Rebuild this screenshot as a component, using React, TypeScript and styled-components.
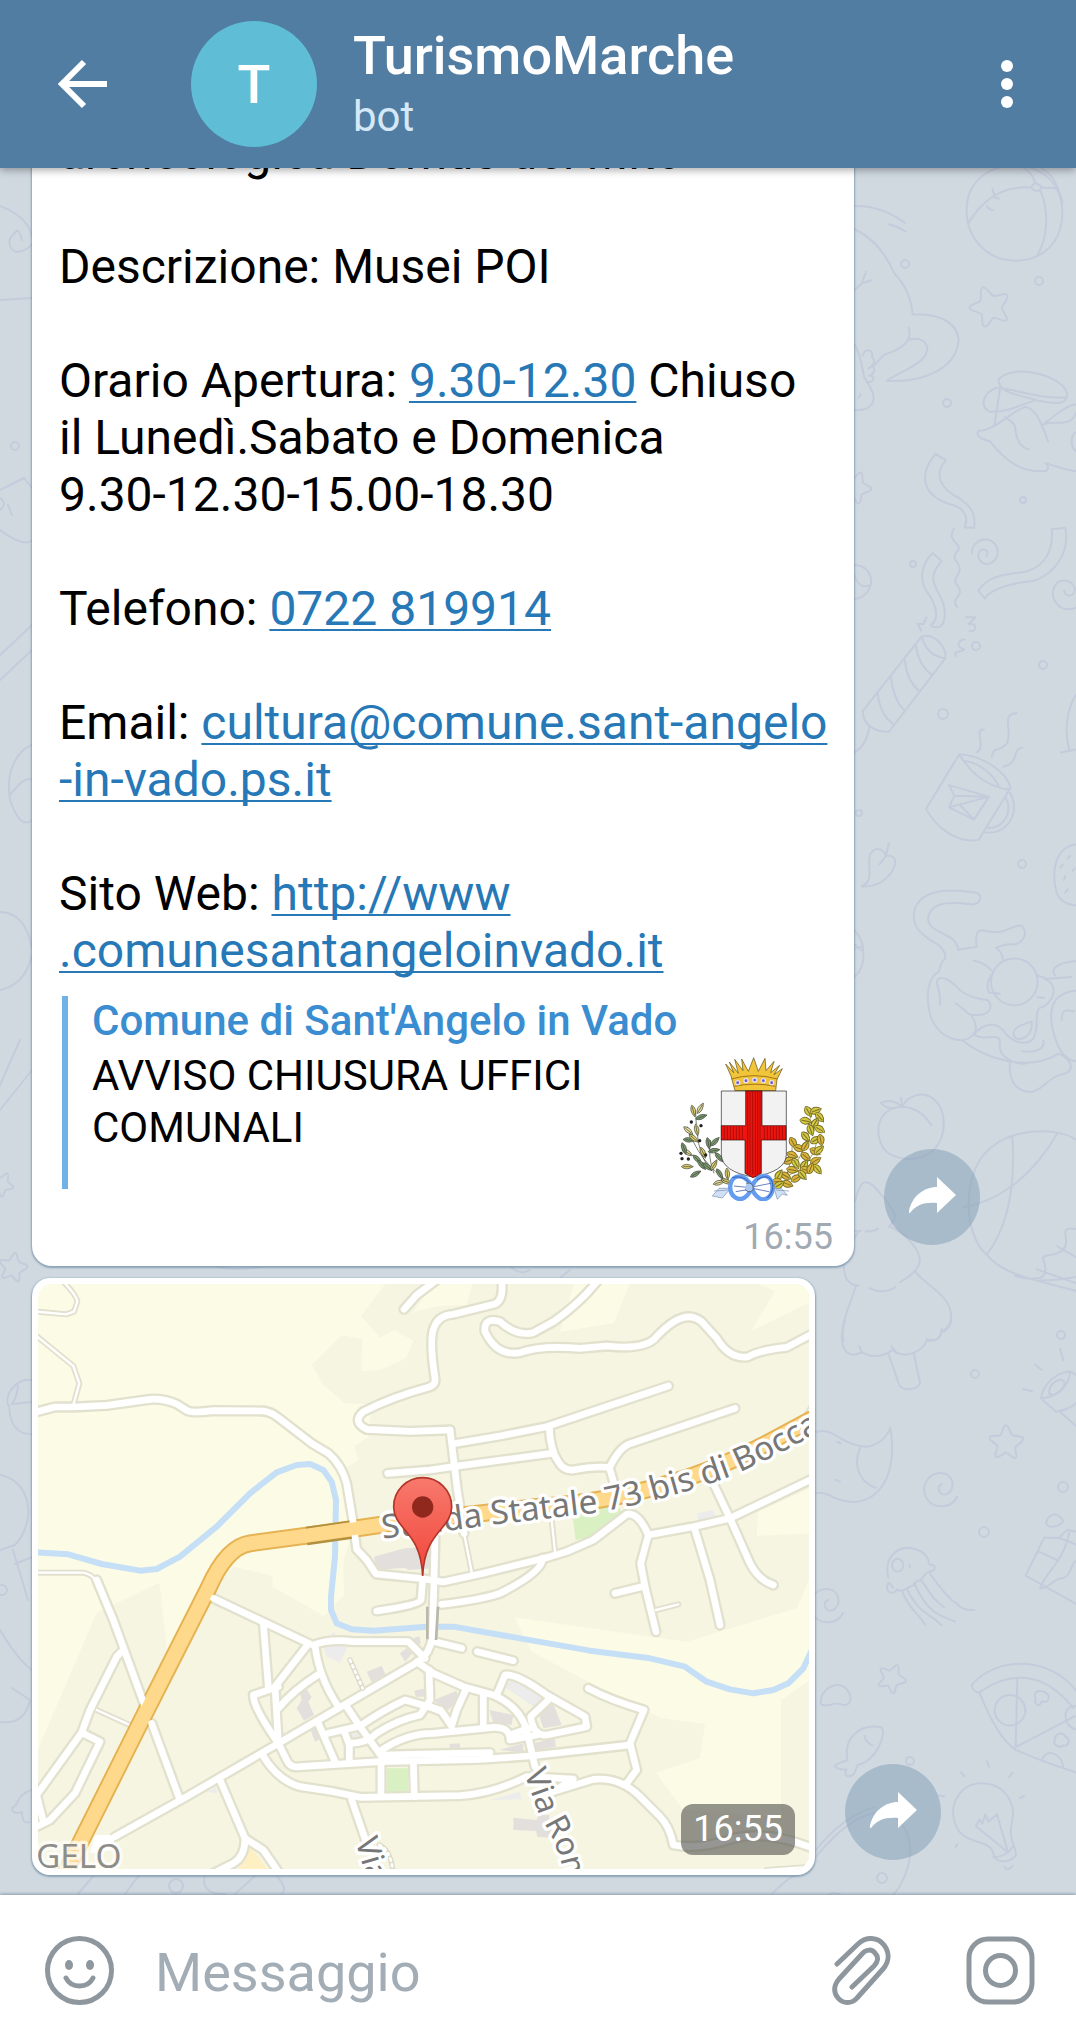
import React from 'react';
import styled, { createGlobalStyle } from 'styled-components';

const GlobalStyle = createGlobalStyle`
  *, *::before, *::after { box-sizing: border-box; }
  body {
    margin: 0;
    background: #d0d9e0;
    font-family: Roboto, "Noto Sans", sans-serif;
    color: #000;
  }
  button { font: inherit; border: 0; padding: 0; background: none; cursor: pointer; }
`;

const Screen = styled.div`
  display: flex;
  flex-direction: column;
  height: 100vh;
  overflow: hidden;
`;

const Header = styled.header`
  display: flex;
  align-items: center;
  flex: none;
  min-height: 168px;
  padding: 0 48px 0 56px;
  background: #517da2;
  box-shadow: 0 2px 8px rgba(0, 0, 0, 0.35);
  z-index: 2;
`;

const IconButton = styled.button`
  display: block;
  flex: none;
  line-height: 0;
`;

const Avatar = styled.div`
  display: flex;
  align-items: center;
  justify-content: center;
  flex: none;
  width: 126px;
  height: 126px;
  margin-left: 80px;
  border-radius: 50%;
  background: #5fbed5;
  color: #fff;
  font-size: 54px;
  font-weight: 500;
`;

const Heading = styled.div`
  flex: 1;
  min-width: 0;
  margin-left: 36px;
`;

const ChatTitle = styled.h1`
  margin: 0;
  color: #fff;
  font-size: 54px;
  font-weight: 500;
  line-height: 66px;
`;

const ChatStatus = styled.p`
  margin: 0;
  color: #d5e8f7;
  font-size: 42px;
  line-height: 56px;
`;

const Chat = styled.main`
  position: relative;
  display: flex;
  flex: 1;
  flex-direction: column;
  justify-content: flex-end;
  gap: 12px;
  min-height: 0;
  padding: 0 30px 20px 32px;
  overflow: hidden;
  background: #d0d9e0;
`;

const WallpaperArt = styled.svg`
  position: absolute;
  inset: 0;
  width: 100%;
  height: 100%;
  fill: none;
  stroke: #c4ccdc;
  stroke-width: 2;
  stroke-linecap: round;
  stroke-linejoin: round;
  path, circle, ellipse { vector-effect: non-scaling-stroke; }
`;

const MessageRow = styled.div`
  position: relative;
  display: flex;
  flex: none;
  align-items: flex-end;
  gap: 30px;
`;

const Bubble = styled.article`
  flex: 0 1 822px;
  min-width: 0;
  padding: 0 21px 8px 27px;
  border-radius: 20px;
  background: #fff;
  box-shadow: 0 1px 2px 1px rgba(110, 140, 165, 0.7);
`;

const MessageText = styled.p`
  margin: 0;
  font-size: 48px;
  line-height: 57px;
  white-space: pre-line;
`;

const TextLink = styled.a`
  color: #2678b6;
  text-decoration: underline;
  text-decoration-thickness: 2px;
  text-underline-offset: 4px;
  text-decoration-skip-ink: none;
`;

const Preview = styled.section`
  margin: 17px 8px 0 3px;
  padding-left: 24px;
  border-left: 6px solid #70b1e6;
`;

const PreviewTitle = styled.h2`
  margin: 0 0 4px;
  color: #3a8dd0;
  font-size: 42px;
  font-weight: 500;
  line-height: 50px;
`;

const PreviewBody = styled.div`
  display: flex;
  justify-content: space-between;
  gap: 20px;
`;

const PreviewText = styled.p`
  margin: 0;
  max-width: 560px;
  font-size: 42px;
  line-height: 52px;
`;

const CrestArt = styled.svg`
  flex: none;
  width: 146px;
  height: 146px;
  margin: 5px 0 -12px;
`;

const Time = styled.time`
  display: block;
  margin-top: 27px;
  color: #a1aab3;
  font-size: 36px;
  line-height: 42px;
  text-align: right;
`;

const MapBubble = styled.article`
  position: relative;
  flex: 0 1 783px;
  min-width: 0;
  padding: 6px;
  border-radius: 18px;
  background: #fff;
  box-shadow: 0 1px 2px 1px rgba(110, 140, 165, 0.7);
`;

const MapArt = styled.svg`
  display: block;
  width: 100%;
  height: auto;
  border-radius: 14px;
`;

const MapTime = styled.time`
  position: absolute;
  right: 20px;
  bottom: 20px;
  padding: 4px 12px;
  border-radius: 12px;
  background: rgba(80, 80, 76, 0.6);
  color: #fff;
  font-size: 36px;
  line-height: 43px;
`;

const ShareButton = styled.button<{ $lift: number }>`
  flex: none;
  width: 96px;
  height: 96px;
  margin-bottom: ${(p) => p.$lift}px;
  border-radius: 50%;
  background: rgba(125, 155, 178, 0.48);
  line-height: 0;
`;

const Composer = styled.form`
  display: flex;
  align-items: center;
  flex: none;
  min-height: 145px;
  padding: 6px 41px 0 45px;
  background: #fff;
  box-shadow: 0 -1px 3px rgba(90, 115, 135, 0.6);
  z-index: 2;
`;

const MessageInput = styled.input`
  flex: 1;
  min-width: 0;
  margin: 0 41px;
  padding: 4px 0 0;
  border: 0;
  outline: 0;
  background: transparent;
  color: #000;
  font-family: inherit;
  font-size: 54px;
  line-height: 64px;
  &::placeholder { color: #a3adb6; opacity: 1; }
`;

const ComposerActions = styled.div`
  display: flex;
  flex: none;
  gap: 75px;
`;

const STAR = 'M0 -22 C4 -22 6 -10 9 -8 C14 -6 24 -8 24 -3 C24 1 14 6 13 9 C12 14 17 22 13 24 C9 25 3 16 0 16 C-3 16 -11 25 -14 22 C-17 18 -11 11 -12 7 C-14 3 -24 -1 -23 -5 C-21 -9 -11 -6 -8 -8 C-5 -11 -4 -22 0 -22Z';
const SPIRAL = 'M17 8 C11 20 -6 20 -13 10 C-21 -3 -11 -17 2 -16 C14 -15 16 1 7 5 C0 8 -5 -2 2 -5';

function Star({ x, y, r = 0, s = 1 }: { x: number; y: number; r?: number; s?: number }) {
  return <path d={STAR} transform={`translate(${x} ${y}) rotate(${r}) scale(${s})`} />;
}

function Spiral({ x, y, r = 0, s = 1 }: { x: number; y: number; r?: number; s?: number }) {
  return <path d={SPIRAL} transform={`translate(${x} ${y}) rotate(${r}) scale(${s})`} />;
}

const BUBBLES = [
  [905, 264, 4], [1039, 281, 4], [947, 403, 4], [1023, 500, 3], [913, 564, 3], [976, 646, 4], [1043, 665, 4],
  [943, 714, 5], [859, 813, 3], [1022, 864, 4], [1061, 1335, 4], [975, 1374, 4], [1063, 1487, 5], [984, 1532, 5],
  [910, 1761, 4], [882, 1878, 5], [15, 446, 4], [176, 1886, 7], [2, 1590, 5],
];

function Wallpaper() {
  return (
    <WallpaperArt viewBox="0 168 1076 1727" preserveAspectRatio="xMidYMid slice" aria-hidden="true">
      {BUBBLES.map(([x, y, r]) => <circle key={`${x}-${y}`} cx={x} cy={y} r={r} />)}
      <Star x={989} y={305} r={-20} s={0.85} />
      <Star x={1006} y={1441} s={0.72} />
      <Star x={892} y={1677} r={25} s={0.6} />
      <Star x={856} y={486} r={20} s={0.65} />
      <Star x={13} y={1266} r={10} s={0.6} />
      <Star x={2} y={1183} r={30} s={0.5} />
      <Spiral x={986} y={552} r={150} s={0.75} />
      <Spiral x={1068} y={594} r={-70} s={0.95} />
      <Spiral x={940} y={1489} />
      <Spiral x={826} y={1605} />
      <g transform="translate(840 160) scale(0.3333 0.3827)">
        <path d="M380 135 C378 60 440 15 525 15 C610 15 668 65 667 140 C665 215 610 263 525 263 C440 262 382 205 380 135Z" />
        <path d="M385 165 C430 100 490 66 573 72 C580 58 590 58 605 70 C600 84 585 84 573 72 M605 72 L650 74 M545 17 C570 30 580 42 585 58 M605 22 C640 40 650 60 668 110 M602 82 C630 140 620 210 592 248 M457 75 L465 98 L477 101 M441 120 Q448 130 460 131" />
        <path d="M20 122 C80 115 140 130 195 164 M147 168 Q175 174 197 187 M30 175 C100 200 140 250 163 296 C200 330 215 370 218 404 C290 400 350 420 356 470 C350 545 250 582 140 577 C190 548 265 530 262 490 C255 465 225 465 205 470 C190 490 165 500 135 508 C120 515 115 530 103 535 M206 437 Q212 455 205 468 M78 292 L65 323 L94 314 M65 323 L30 350" />
        <path d="M30 470 C60 490 65 540 72 565 C85 590 102 600 101 625 C98 645 75 658 30 653 M68 510 C80 490 100 495 96 515 C110 525 100 540 84 545 M96 535 C110 550 100 560 88 563 C110 565 100 582 82 580 M62 612 L55 622" />
        <path d="M475 575 C510 530 670 560 682 612 C680 640 650 638 600 630 C530 612 480 610 475 575 M475 595 C530 600 600 625 678 620 M480 598 L463 695 M470 595 C425 610 420 645 450 658 C500 660 540 640 580 630 M415 708 C470 705 500 665 555 645 C590 650 605 690 625 736 M415 708 C405 725 430 730 450 735 C500 790 550 820 620 812 Q630 800 617 792 C650 800 680 813 710 813 M495 672 C525 690 525 690 527 710 Q535 750 566 756 M605 695 C640 670 680 640 710 638 M612 690 C660 680 690 700 710 658 M710 710 C690 720 690 750 710 762" />
        <path d="M287 768 L318 785 C280 820 300 860 360 885 C400 910 408 930 402 961 L374 960 C390 920 360 905 320 897 C240 870 240 815 287 768Z M342 963 C315 1000 375 1000 350 1025 C325 1050 380 1050 350 1090 C330 1110 380 1115 350 1145 Q340 1155 351 1168" />
        <path d="M278 1027 L305 1048 C260 1090 285 1110 300 1140 C320 1170 320 1215 295 1221 Q275 1222 273 1215 C305 1195 280 1150 262 1130 C235 1095 245 1055 278 1027Z M635 965 L676 961 C690 1020 650 1080 580 1100 C520 1105 450 1120 435 1146 L415 1126 C450 1080 500 1085 560 1075 C620 1060 640 1015 635 965Z" />
        <path d="M377 1195 L407 1195 L385 1213 Q410 1210 405 1225 Q400 1235 388 1230 M259 1195 L251 1213 L233 1212 L244 1230 M375 1253 Q355 1253 355 1270 L373 1280 L346 1288 L347 1297" />
        <path d="M245 1245 L68 1440 C70 1480 110 1495 147 1494 L316 1302 C320 1270 280 1235 245 1245 Q260 1295 316 1302 M228 1268 Q235 1320 277 1346 M195 1308 Q200 1360 238 1388 M153 1353 Q160 1410 193 1438 M113 1392 Q120 1450 158 1472 M88 1480 Q80 1530 43 1548 M43 1058 C110 1060 110 1140 43 1147 M43 1085 Q60 1125 92 1110" />
        <path d="M710 1395 C675 1440 675 1500 688 1542 M662 1548 L710 1540" />
      </g>
      <g transform="translate(840 740) scale(0.3333 0.3827)">
        <path d="M358 37 L258 180 C290 230 350 270 416 261 L512 125 C500 85 430 40 358 37 C400 100 460 125 508 130 M375 55 C420 60 460 90 477 122 M497 150 C520 190 490 230 445 230 M510 138 C545 190 500 250 435 241 M327 118 L447 148 L402 208 L327 176 L343 146Z M343 146 L447 148 L327 176 M360 170 L402 208 M432 -27 C400 -30 440 20 410 32 M530 -70 C480 -70 520 -20 500 10 Q485 23 470 25 Q460 25 455 45 M547 20 C515 22 540 60 490 70" />
        <path d="M65 382 C105 370 80 330 90 300 C105 275 130 285 138 302 C180 300 165 330 155 345 C130 375 100 385 65 382 M147 269 L138 302 L118 326" />
        <path d="M354 548 C350 500 265 510 264 465 C275 415 350 425 400 430 C425 425 430 400 400 398 C340 390 250 385 225 440 C210 490 250 510 275 525 C310 540 320 560 315 572 C300 580 300 595 297 605 C260 620 255 680 275 730 C300 780 370 800 400 770 C415 755 405 730 390 717 C450 725 460 700 445 680 C400 675 370 665 350 645 C310 610 285 620 292 640 Q302 665 300 692 M354 548 L410 540 C405 510 410 490 440 500 C500 510 520 480 545 485 C570 510 540 540 510 533 Q490 535 468 543 Q487 555 488 573 M400 576 Q430 580 455 602 M348 688 C370 700 380 715 390 717 M400 770 C430 740 470 730 500 770 C520 790 560 800 580 780 C600 750 580 710 600 700 C640 690 660 640 615 625 M365 783 C430 830 560 870 655 820 M405 770 C430 790 480 760 480 790 C470 830 530 850 560 845 M510 838 C505 880 520 920 575 920 C620 910 620 880 680 870 C705 855 690 835 660 820" />
        <ellipse cx="523" cy="632" rx="70" ry="61" />
        <path d="M458 610 Q435 635 447 660 L480 663 M592 615 L622 624 L693 619 M592 672 L612 674 M710 578 C650 580 630 600 645 615 M710 655 C625 660 620 720 650 790 Q670 835 710 840 M665 732 Q665 700 690 708 L703 708 M523 775 C510 745 570 740 575 735 C580 780 530 790 523 775 M545 813 C600 820 615 800 610 785 M710 272 C640 280 635 350 650 400 Q665 430 710 432 M690 302 L683 310 M668 326 L662 334 M704 336 L698 342 M676 355 L672 366 M684 390 L676 398 M43 497 C80 530 80 590 43 620 M43 545 L65 540 M45 535 L65 550" />
        <path d="M187 958 C100 960 100 1050 145 1080 C200 1105 290 1105 310 1020 C320 950 270 920 230 928 Q200 935 187 958 C230 960 255 980 274 1006 M187 958 L183 935 M187 958 C160 940 140 940 123 948 Q140 965 165 962" />
        <path d="M45 1205 C60 1155 70 1145 100 1165 Q150 1210 166 1243 C160 1265 140 1275 150 1272 C200 1290 250 1340 237 1370 Q230 1390 180 1417 M45 1283 L62 1283 M78 1284 Q100 1285 114 1277 M88 1432 Q130 1450 165 1430 M55 1285 C20 1330 0 1370 20 1410 Q40 1428 55 1425 M48 1425 C30 1480 0 1520 10 1570 M225 1388 C260 1430 340 1450 333 1515 C325 1545 310 1550 305 1540 C305 1560 290 1575 260 1565" />
        <path d="M710 1045 C650 1010 500 1010 430 1085 C370 1150 370 1290 440 1345 C490 1400 590 1410 710 1440 M517 1035 C525 1140 515 1260 440 1345 M652 1028 C590 1120 500 1200 370 1221 M710 1278 C650 1270 690 1300 675 1325 C650 1355 610 1340 608 1355 C620 1375 620 1400 600 1405 Q560 1412 525 1400 M652 1323 L710 1352 M590 1383 L710 1420 M600 1412 Q660 1412 710 1402" />
      </g>
      <g transform="translate(810 1320) scale(0.3333 0.3731)">
        <path d="M105 0 C80 70 110 110 155 86 Q200 110 248 80 C290 110 340 80 350 55 Q390 60 395 30 Q420 20 425 0 M148 70 L155 86 M244 70 L255 82 M235 90 L268 175 C280 190 320 190 330 170 L312 90" />
        <path d="M18 300 C70 285 90 335 170 340 Q225 330 241 288 C270 440 180 520 70 475 Q40 460 18 464 M152 340 C130 380 140 430 197 450 M83 327 L93 331 M75 428 L90 434 M640 185 L666 191 M675 119 L695 134 M750 77 L760 108" />
        <path d="M693 210 C700 170 740 140 780 138 L800 148 M693 210 L738 246 Q780 240 800 222 M693 210 C730 210 780 180 780 138 M718 198 C715 165 760 150 764 168 C760 195 730 205 718 198 M752 248 L800 285" />
        <path d="M708 545 C715 520 740 510 760 538 C750 555 715 560 708 545 M703 583 L647 685 L800 762 M703 583 L748 584 L800 602 M685 620 L745 645 M748 584 Q765 565 775 563 L800 568 M778 570 C760 650 710 670 690 720 C720 720 730 690 760 692 C790 680 780 650 800 645" />
        <path d="M235 690 C220 630 270 600 320 615 C350 625 355 640 358 655 C385 655 375 675 355 675 C340 680 340 700 320 700 C310 720 300 710 290 720 Q270 730 262 722 C250 740 220 730 235 705 Q240 705 250 718" />
        <circle cx="263" cy="657" r="17" />
        <path d="M298 655 L300 664 M275 725 C300 780 320 780 345 817 M290 720 C330 790 350 780 395 818 M312 705 C350 780 380 790 435 808 M335 700 C360 730 370 750 403 770 M360 680 C400 730 420 750 440 760 Q460 780 493 777" />
        <path d="M485 978 C560 900 720 900 800 995 M485 978 Q490 1000 508 998 C600 940 700 940 790 1040 M508 998 C540 1070 580 1130 617 1152 Q700 1185 800 1213 M622 962 L617 1145 L795 1062 M695 1180 C705 1150 750 1155 760 1197 M800 1035 C755 1030 755 1090 800 1098" />
        <ellipse cx="600" cy="1046" rx="46" ry="41" />
        <path d="M675 1010 C670 990 700 990 715 1005 C720 1025 705 1025 695 1022 C690 1040 670 1030 677 1018Z M735 1125 C735 1105 760 1105 765 1115 C785 1125 775 1145 760 1140 C745 1150 725 1135 735 1125Z" />
        <path d="M32 1028 C30 990 80 965 105 985 C135 1010 120 1040 95 1030 Q75 1025 60 1032 Q38 1035 32 1028Z M112 1180 C100 1120 150 1080 215 1092 C230 1110 200 1180 145 1192 C135 1195 140 1225 115 1223 Q100 1220 110 1205 C80 1205 60 1195 90 1187Z M164 1115 Q165 1130 187 1141" />
        <path d="M550 1430 C540 1390 470 1410 440 1360 C410 1300 450 1240 520 1242 C590 1245 620 1300 605 1350 C595 1400 620 1410 618 1435 C600 1455 560 1460 550 1430 M550 1440 Q590 1440 610 1410 M583 1465 Q595 1480 608 1462 M592 1425 L498 1357 L508 1338 L517 1350 L526 1325 L535 1345 L561 1325 L592 1420 M530 1181 L537 1197 M453 1212 L463 1223 M608 1213 L598 1225 M642 1276 L630 1281 M385 1274 L403 1277 M436 1413 L442 1405" />
        <path d="M18 1420 C80 1350 140 1320 195 1305 M18 1438 C100 1350 160 1320 220 1318 Q300 1340 301 1430 Q290 1510 235 1554 M35 1554 C60 1530 90 1530 105 1554" />
      </g>
      <path d="M0 206 C15 212 28 220 32 236 M15 233 C5 240 10 252 18 252 Q28 250 32 244 M15 233 Q18 226 22 240 M0 300 L32 298 M0 490 L24 478 L32 488 M0 530 Q25 548 32 540 M0 510 Q8 504 0 498 M8 505 L12 515 M0 655 L32 625 M0 680 L32 650 M32 745 C18 750 5 770 10 800 Q20 830 32 820 M10 795 Q25 775 32 780 M0 912 Q25 912 32 948 M0 990 Q25 985 32 955 M0 1085 L20 1040 M0 1110 L32 1070 M32 1380 C15 1378 5 1395 8 1405 M9 1405 Q10 1435 32 1434 M32 1402 L12 1404 Q18 1395 18 1383 M0 1475 C30 1480 38 1520 15 1545 L0 1550 M13 1550 L28 1600 M15 1564 L32 1557 M0 1630 Q18 1660 32 1670 M12 1688 L30 1700 Q25 1725 0 1722 M32 1790 C15 1795 20 1805 12 1808 Q12 1815 22 1812 Q22 1825 30 1822 M78 1894 L95 1874 M125 1894 L140 1874 M205 1874 Q200 1895 225 1894 M235 1894 L255 1876 M275 1874 Q290 1890 280 1895 M215 1266 Q235 1272 265 1266 M530 1270 Q520 1276 510 1266 M570 1270 L560 1278 M772 1894 Q790 1875 800 1874" />
    </WallpaperArt>
  );
}

type Leaf = [number, number, number, number];

const LEFT_LEAVES: Leaf[] = [
  [103, 213, 75, 0], [124, 205, -60, 1], [127, 231, -20, 2], [88, 272, 40, 1], [113, 270, 80, 0], [90, 300, 5, 2],
  [104, 295, 40, 0], [148, 310, 80, 2], [168, 305, -45, 2], [165, 332, -10, 2], [132, 338, 65, 0], [115, 358, 45, 2],
  [85, 338, 30, 1], [85, 380, 0, 0], [128, 375, 50, 2], [145, 380, 40, 2], [180, 352, 50, 2], [110, 402, -30, 2],
  [165, 375, -60, 0], [182, 402, 60, 2], [205, 402, 85, 0], [180, 428, -15, 1], [203, 425, 20, 0], [75, 325, 70, 2],
];

const RIGHT_LEAVES: Leaf[] = [
  [448, 215, 60, 3], [470, 212, -20, 3], [482, 232, 50, 3], [440, 243, 10, 3], [468, 250, -60, 3], [482, 268, 30, 3],
  [455, 270, 70, 3], [470, 300, -30, 3], [440, 290, 50, 3], [485, 300, 80, 4], [402, 308, 60, 4], [420, 325, 20, 4],
  [440, 318, -60, 4], [468, 335, 30, 4], [480, 330, -40, 3], [400, 345, 20, 4], [390, 362, -20, 4], [410, 370, 60, 3],
  [440, 350, 40, 4], [470, 362, -30, 4], [436, 375, -60, 3], [400, 390, 10, 4], [380, 408, 30, 4], [360, 405, -60, 3],
  [440, 390, 20, 4], [475, 388, 50, 3], [355, 425, 0, 4], [385, 432, 20, 4], [412, 415, -30, 4], [430, 405, 50, 3],
  [360, 435, -30, 3], [455, 385, -70, 4],
];

const LEAF_FILLS = ['#e3d06f', '#efe2a0', '#7d9c72', '#d5c93f', '#dfb43a'];

function Leaves({ items, plump }: { items: Leaf[]; plump: number }) {
  return (
    <>
      {items.map(([x, y, a, c]) => (
        <path
          key={`${x}-${y}`}
          d="M-18 0 Q-4 -14 18 0 Q-4 13 -18 0 M-12 0 L12 0"
          transform={`translate(${x} ${y}) rotate(${a}) scale(1 ${plump})`}
          fill={LEAF_FILLS[c]}
          stroke={c > 2 ? '#77702a' : '#3d4638'}
          strokeWidth="2"
        />
      ))}
    </>
  );
}

function Crest() {
  const bars = [266, 273, 281, 289, 296, 303];
  const stubs = [196, 205, 214, 223, 232, 241, 250, 316, 325, 334, 343, 352, 361, 370];
  return (
    <CrestArt viewBox="60 45 438 438" role="img" aria-label="Stemma del Comune">
      <path d="M215 430 C160 390 115 350 85 260 M150 385 Q110 330 110 215 M165 400 Q145 350 155 300" stroke="#39402f" strokeWidth="2" fill="none" />
      <path d="M345 430 C410 390 450 330 455 215 M390 405 Q460 380 475 300 M380 415 Q400 360 400 310" stroke="#7a6a20" strokeWidth="2" fill="none" />
      <Leaves items={LEFT_LEAVES} plump={1} />
      <Leaves items={RIGHT_LEAVES} plump={1.5} />
      {[[97, 246], [126, 257], [122, 302], [66, 340], [88, 357], [69, 356], [140, 345]].map(([x, y]) => <circle key={`${x}-${y}`} cx={x} cy={y} r="5" fill="#222" />)}
      <path d="M228 152 L216 108 L200 72 L224 98 L211 66 L238 100 L227 58 L252 92 L248 57 L268 94 L284 53 L298 94 L318 55 L321 92 L345 64 L335 98 L362 76 L345 104 L370 86 L354 118 L350 152Z" fill="#f1c53a" stroke="#5a4a10" strokeWidth="2" />
      <path d="M216 117 Q285 97 356 117 M226 139 Q285 126 350 139" fill="none" stroke="#a27616" strokeWidth="3" />
      {[[236, 128], [261, 122], [287, 120], [313, 122], [338, 128]].map(([x, y]) => (
        <g key={x}>
          <circle cx={x} cy={y} r="8" fill="#e4dcf7" />
          <circle cx={x} cy={y} r="4" fill="#6557cc" />
        </g>
      ))}
      <path d="M187 153 H382 V345 Q380 395 282 411 Q190 395 187 345Z" fill="#f2f2f2" stroke="#222" strokeWidth="2" />
      <path d="M260 153 H309 V257 H381 V300 H307 V400 L282 413 L258 400 V300 H187 V257 H260Z" fill="#ee150f" stroke="#380505" strokeWidth="2" />
      {bars.map((x) => <path key={x} d={`M${x} 154 V404`} stroke="#8e0906" strokeWidth="2" />)}
      {stubs.map((x) => <path key={x} d={`M${x} 259 V299`} stroke="#8e0906" strokeWidth="2" />)}
      <path d="M165 453 L210 450 M350 450 L390 453 M180 445 L160 468 L190 474 L215 445Z M345 445 L355 478 L370 462 L385 466 L368 446Z" fill="#cfe0f7" stroke="#7a91ad" strokeWidth="2" />
      <path d="M278 440 C260 400 220 400 214 435 C210 470 240 485 258 472 Q274 460 278 440 C300 395 335 400 340 435 C345 475 310 488 295 470 Q282 460 278 440Z" fill="#fff" stroke="#649cf0" strokeWidth="13" />
      <path d="M220 413 Q250 405 268 425 M294 420 Q320 400 338 420 Q350 450 325 474 M225 438 L275 443 M230 455 L272 448 M285 440 L335 430 M285 446 L330 455" fill="none" stroke="#1f3f9d" strokeWidth="2" />
      <path d="M262 430 Q285 425 282 450 Q270 462 258 448" fill="#a9c8f6" stroke="#345" strokeWidth="2" />
    </CrestArt>
  );
}

const STREETS = [
  'M100 428 L165 411 L220 411 L320 406 L450 388 Q490 385 530 402 L560 421 Q575 430 640 422 L790 423 Q815 426 835 443 L935 520 L985 550 Q1025 585 1040 640 L1060 760 L1070 838 L1100 870 L1128 912 L1268 926 L1330 936 L1450 910 L1650 860 L1700 845 L1780 810 L1880 733 Q1915 725 1945 795 L2080 770 L2190 745 L2440 625',
  'M2140 640 L2190 745 L2250 880 Q2275 930 2320 945',
  'M2085 780 L2130 930 L2160 1065',
  'M1945 795 L1922 880 L1935 950 L1968 1085',
  'M1845 970 L1935 948',
  'M1628 864 Q1630 905 1500 970 Q1440 990 1325 1003',
  'M1305 800 L1302 930 L1297 1100 Q1290 1150 1255 1175 L835 1420 L560 1580 L345 1700',
  'M1268 926 L1263 990 Q1255 1005 1130 1023',
  'M1350 480 L1372 660 L1392 790',
  'M1163 610 L1290 600 L1360 590 L1655 550',
  'M1370 520 L1500 498 L1640 470 L2005 348',
  'M1648 470 Q1650 540 1675 575 Q1690 602 1720 600 Q1780 588 1828 592 L1845 650',
  'M1828 594 Q1860 525 1900 518 L2205 415',
  'M1350 480 L1230 484 L1100 478 Q1055 455 1090 425 Q1180 380 1285 352 Q1308 345 1305 325 Q1290 230 1298 185 Q1310 135 1360 133 L1485 102 Q1512 90 1505 30',
  'M1212 118 L1250 75 L1310 30',
  'M1795 30 Q1740 100 1660 155 L1600 188 Q1550 200 1500 155 Q1450 140 1455 185 Q1490 260 1560 248 Q1620 225 1740 235 L1820 228 Q1930 240 1965 205 Q2050 110 2105 155 L2150 205 Q2190 270 2245 260 Q2280 240 2360 232 L2440 190',
  'M290 930 L340 1050 L435 1310',
  'M455 1360 L540 1590',
  'M365 1145 L350 1160 L270 1320 L245 1388 L110 1575 L130 1655',
  'M245 1388 L300 1415 L225 1570 L150 1650 L100 1675',
  'M640 985 L930 1122',
  'M790 1060 L805 1252',
  'M925 1122 L825 1250 L835 1420',
  'M835 1250 L760 1275 Q758 1310 835 1420 L860 1470 Q870 1495 900 1490 L1140 1475 L1440 1468 L1590 1458 L1890 1425',
  'M940 1125 Q990 1105 1060 1115 L1225 1115 L1275 1165',
  'M945 1125 Q955 1220 1015 1310',
  'M960 1210 Q880 1260 835 1315',
  'M1040 1310 L1080 1370 L1145 1460',
  'M955 1360 L1005 1475',
  'M985 1390 L1080 1368 Q1150 1320 1215 1290 L1320 1320',
  'M1035 1390 L1048 1425 L1048 1470',
  'M1048 1420 Q1100 1420 1130 1390 Q1190 1350 1260 1335 L1290 1290 L1287 1200',
  'M1145 1440 Q1220 1390 1300 1390 L1480 1372 Q1530 1370 1530 1410 L1610 1395',
  'M1145 1455 L1470 1448',
  'M785 1450 Q830 1530 900 1550 L1000 1565 L1080 1582 L1380 1577 Q1480 1570 1580 1520 L1720 1527 L1660 1565 L1780 1528 Q1860 1520 1920 1580 L1980 1640 Q2010 1670 2020 1725 Q2100 1740 2200 1705 Q2300 1680 2440 1735',
  'M1143 1475 L1143 1580',
  'M1240 1475 L1243 1580',
  'M660 1530 L735 1705 Q735 1760 700 1780 L640 1810',
  'M735 1705 L790 1740 L835 1805',
  'M1055 1590 L1100 1720',
  'M1250 1175 L1300 1210 L1390 1250 L1480 1275 Q1560 1310 1580 1380 L1605 1490',
  'M1490 1275 L1515 1215 Q1550 1210 1640 1275 L1755 1340 L1760 1370 L1640 1395 Q1600 1400 1592 1340 L1650 1285',
  'M1290 1310 L1325 1325 L1355 1368 L1370 1320 L1395 1265',
  'M1450 1275 L1450 1372',
  'M1530 1395 L1600 1370',
  'M1765 1255 Q1830 1290 1932 1320 L1890 1420 L1910 1500 L1880 1540',
  'M1305 1115 L1385 1135',
  'M1432 1145 L1540 1172',
];

const LANES = [
  'M185 30 Q230 75 232 95 L222 125 L198 133 L100 124',
  'M100 190 L220 288 L238 340 L220 405',
  'M100 908 L250 908 Q275 912 290 935',
  'M290 1320 L400 1370 L430 1320',
  'M1392 790 L1415 905',
  'M1655 750 L1665 845',
  'M1968 1020 L2035 1003',
  'M2440 400 L2400 470',
  'M2300 1800 L2440 1790',
];

const HIGHWAY = 'M180 1840 L255 1690 L440 1320 L625 955 Q680 830 750 820 L920 797 L1160 762 L1600 712 Q1800 700 1990 645 Q2150 600 2300 520 L2440 445';
const RIVER = 'M100 847 L205 853 L305 882 L420 902 L470 897 L540 860 L650 770 L750 670 L830 607 L890 585 L930 582 L970 600 L995 635 L1008 690 L1005 860 L993 980 L993 1020 L1010 1060 L1055 1078 L1120 1082 L1280 1070 L1360 1070 L1560 1105 L1770 1142 L1950 1165 L2055 1190 L2120 1235 L2190 1258 L2260 1270 L2320 1260 L2365 1240 L2410 1195 L2440 1130';

const FOOTPRINTS = [
  'M1122 860 L1195 840 L1215 835 L1290 830 L1300 895 L1225 900 L1215 893 L1130 900Z',
  'M890 1315 L905 1290 L900 1270 L920 1258 L935 1282 L925 1295 L942 1335 L912 1352Z',
  'M1100 1205 L1145 1187 L1157 1215 L1115 1237Z', 'M930 1375 L948 1367 L962 1405 L945 1416Z',
  'M1200 1150 L1220 1135 L1237 1150 L1215 1175Z', 'M1243 1262 L1275 1255 L1277 1280 L1247 1280Z',
  'M1303 1290 L1370 1262 L1375 1290 L1345 1320 L1320 1310Z', 'M1468 1320 L1540 1335 L1535 1365 L1480 1357Z',
  'M1615 1330 L1660 1302 L1685 1365 L1630 1375Z', 'M1498 1440 L1570 1420 L1570 1447Z',
  'M1600 1420 L1665 1405 L1667 1430 L1605 1440Z', 'M1540 1643 L1610 1650 L1615 1635 L1647 1635 L1650 1652 L1680 1655 L1683 1685 L1650 1690 L1645 1703 L1612 1700 L1608 1683 L1540 1680Z',
  'M1240 1105 L1258 1098 L1262 1122 L1245 1125Z', 'M1348 1422 L1380 1420 L1380 1433 L1350 1436Z',
];

function TownMap() {
  return (
    <MapArt viewBox="114 42 2313 1755" role="img" aria-label="Mappa della posizione">
      <defs>
        <linearGradient id="pinFill" x1="0" y1="0" x2="0" y2="1">
          <stop offset="0" stopColor="#f8796d" />
          <stop offset="1" stopColor="#f04639" />
        </linearGradient>
        <path id="highwayLabel" d="M1148 806 L1345 782 L1480 764 L1790 728 Q2000 690 2190 620 Q2320 565 2540 440" />
        <path id="viaRomaLabel" d="M1572 1508 L1612 1620 L1655 1700 Q1685 1760 1710 1900" />
        <path id="viaLabel" d="M1066 1712 L1095 1810 L1130 1920" />
      </defs>
      <rect x="100" y="30" width="2350" height="1790" fill="#fcfbe6" />
      <path
        d="M1165 30 L1083 137 L1140 203 L1183 180 L1240 212 L1218 265 L1140 300 L1083 303 L1087 208 L1025 195 L935 285 L970 345 L1035 400 L1115 403 L1105 502 L1063 528 L1075 570 L1040 590 L1055 800 L1030 870 L1032 975 L972 1038 L818 950 L817 918 L700 890 L505 1120 L478 938 L290 1028 L100 1470 V1820 H2450 V30Z"
        fill="#f6f5e1"
      />
      <path d="M478 938 L505 1110 L640 900 L580 1010 L505 1180Z" fill="#fcfbe6" />
      <path
        d="M1543 1042 L2060 1115 L2390 1015 L2440 900 V1225 L2343 1290 V1640 L2050 1620 L1968 1508 L2100 1465 L2115 1362 L1985 1345 L1840 1275 L1595 1145Z M2245 30 L2325 62 L2255 182 L2440 92 V30Z M1725 30 L1680 185 L1842 160 L1893 30Z M1240 125 L1320 108 L1400 105 L1420 30 L1310 30Z M2275 725 L2270 798 L2440 790 V650Z"
        fill="#fcfbe6"
      />
      <path d="M1718 738 L1850 700 L1870 735 L1780 800 L1727 810Z M1160 1495 H1224 V1565 H1160Z" fill="#d9f0c2" />
      <path d="M750 1730 L805 1800 H715Z" fill="#fff0c4" />
      <path d="M970 1130 L1000 1085 L1043 1130 L1020 1178 L980 1160Z M1512 1250 L1540 1225 L1640 1290 L1625 1325Z M2092 730 L2140 720 L2148 740 L2095 752Z M1470 1590 L1560 1565 L1565 1588Z M620 1565 L650 1550 L650 1570Z M1055 1395 L1080 1385 L1083 1403 L1060 1408Z" fill="#ececec" />
      {FOOTPRINTS.map((d) => <path key={d} d={d} fill="#e3dfdd" />)}
      <g fill="none" strokeLinejoin="round" strokeLinecap="round">
        <path d={RIVER} stroke="#c5dff6" strokeWidth="18" />
        {LANES.map((d) => <path key={d} d={d} stroke="#e1e0ce" strokeWidth="18" />)}
        {STREETS.map((d) => <path key={d} d={d} stroke="#e2e1ce" strokeWidth="34" />)}
        {LANES.map((d) => <path key={d} d={d} stroke="#fff" strokeWidth="7" />)}
        <path d={HIGHWAY} stroke="#e5b353" strokeWidth="54" />
        <path d="M918 774 L1058 754 M922 822 L1064 802" stroke="#b1913f" strokeWidth="7" strokeLinecap="butt" />
        <path d={HIGHWAY} stroke="#ffd98b" strokeWidth="42" />
        {STREETS.map((d) => <path key={d} d={d} stroke="#fff" strokeWidth="20" />)}
        <path d={HIGHWAY} stroke="#ffd98b" strokeWidth="38" />
        <path d="M1282 1010 V1108 M1314 1010 L1308 1110" stroke="#b9b8aa" strokeWidth="8" strokeLinecap="butt" />
        <path d="M1050 1170 L1088 1255 M1138 1725 Q1170 1740 1178 1797" stroke="#dddccb" strokeWidth="16" />
        <path d="M1050 1170 L1088 1255 M1138 1725 Q1170 1740 1178 1797" stroke="#fff" strokeWidth="8" strokeDasharray="6 12" />
      </g>
      <path d="M285 1695 H350 L330 1740 L270 1750Z" fill="#fff" />
      <g
        fontFamily='"Noto Sans", "Open Sans", sans-serif'
        fill="#777"
        stroke="#fff"
        strokeWidth="20"
        strokeLinejoin="round"
        paintOrder="stroke"
      >
        <text fontSize="100"><textPath href="#highwayLabel">Strada Statale 73 bis di Bocca</textPath></text>
        <text fontSize="96"><textPath href="#viaRomaLabel">Via Rom</textPath></text>
        <text fontSize="96"><textPath href="#viaLabel">Via</textPath></text>
        <text x="108" y="1795" fontSize="100" fill="#8d8d8a" strokeOpacity="0.7">GELO</text>
      </g>
      <path d="M1268 918 C1262 780 1181 780 1181 710 A87 87 0 0 1 1355 710 C1355 780 1274 780 1268 918Z" fill="url(#pinFill)" stroke="#b3362b" strokeWidth="5" />
      <circle cx="1268" cy="711" r="32" fill="#91281e" />
    </MapArt>
  );
}

function Share({ lift }: { lift: number }) {
  return (
    <ShareButton type="button" aria-label="Inoltra" $lift={lift}>
      <svg width="96" height="96" viewBox="0 0 96 96" fill="#fff">
        <path d="M53 28 L72 46 L53 64 V54 C40 53 32 56 26 64 Q25 65 25 62 C28 47 40 38 53 38Z" />
      </svg>
    </ShareButton>
  );
}

export default function App() {
  return (
    <Screen>
      <GlobalStyle />
      <Header>
        <IconButton type="button" aria-label="Indietro">
          <svg width="55" height="54" viewBox="0 0 55 54" fill="none" stroke="#fff" strokeWidth="6">
            <path d="M28 5 L6 27 L28 49 M6 27 H51" />
          </svg>
        </IconButton>
        <Avatar aria-hidden="true">T</Avatar>
        <Heading>
          <ChatTitle>TurismoMarche</ChatTitle>
          <ChatStatus>bot</ChatStatus>
        </Heading>
        <IconButton type="button" aria-label="Altre opzioni">
          <svg width="42" height="54" viewBox="0 0 42 54" fill="#fff">
            <circle cx="21" cy="9" r="6" />
            <circle cx="21" cy="27" r="6" />
            <circle cx="21" cy="45" r="6" />
          </svg>
        </IconButton>
      </Header>

      <Chat>
        <Wallpaper />
        <MessageRow>
          <Bubble>
            <MessageText>
              {'archeologica Domus del Mito\n\nDescrizione: Musei POI\n\nOrario Apertura: '}
              <TextLink href="#orario">9.30-12.30</TextLink>
              {' Chiuso\nil Lunedì.Sabato e Domenica\n9.30-12.30-15.00-18.30\n\nTelefono: '}
              <TextLink href="tel:0722819914">0722 819914</TextLink>
              {'\n\nEmail: '}
              <TextLink href="mailto:cultura@comune.sant-angelo-in-vado.ps.it">{'cultura@comune.sant-angelo\n-in-vado.ps.it'}</TextLink>
              {'\n\nSito Web: '}
              <TextLink href="http://www.comunesantangeloinvado.it">{'http://www\n.comunesantangeloinvado.it'}</TextLink>
            </MessageText>
            <Preview>
              <PreviewTitle>Comune di Sant'Angelo in Vado</PreviewTitle>
              <PreviewBody>
                <PreviewText>AVVISO CHIUSURA UFFICI COMUNALI</PreviewText>
                <Crest />
              </PreviewBody>
            </Preview>
            <Time>16:55</Time>
          </Bubble>
          <Share lift={21} />
        </MessageRow>
        <MessageRow>
          <MapBubble>
            <TownMap />
            <MapTime>16:55</MapTime>
          </MapBubble>
          <Share lift={15} />
        </MessageRow>
      </Chat>

      <Composer onSubmit={(e) => e.preventDefault()}>
        <IconButton type="button" aria-label="Emoji">
          <svg width="69" height="69" viewBox="0 0 69 69" fill="none" stroke="#8e979e" strokeWidth="5" strokeLinecap="round">
            <circle cx="34.5" cy="34.5" r="32" />
            <path d="M21 42 Q25 50 34.5 50 Q44 50 48 42" />
            <ellipse cx="24" cy="29" rx="4" ry="5" fill="#8e979e" stroke="none" />
            <ellipse cx="45" cy="29" rx="4" ry="5" fill="#8e979e" stroke="none" />
          </svg>
        </IconButton>
        <MessageInput type="text" placeholder="Messaggio" aria-label="Messaggio" />
        <ComposerActions>
          <IconButton type="button" aria-label="Allega">
            <svg width="59" height="69" viewBox="0 0 59 69" fill="none" stroke="#8e979e" strokeWidth="5" strokeLinecap="round" strokeLinejoin="round">
              <path d="M5 28 L26 8 C34 0 46 1 52 9 C58 17 57 26 51 33 L25 62 C20 68 11 68 6 62 C1 56 2 49 7 43 L30 18 C34 13 40 13 43 17 C47 21 46 26 42 30 L20 51" />
            </svg>
          </IconButton>
          <IconButton type="button" aria-label="Fotocamera">
            <svg width="69" height="69" viewBox="0 0 69 69" fill="none" stroke="#8e979e" strokeWidth="5">
              <rect x="3" y="3" width="63" height="63" rx="19" />
              <circle cx="34.5" cy="34.5" r="15" />
            </svg>
          </IconButton>
        </ComposerActions>
      </Composer>
    </Screen>
  );
}
